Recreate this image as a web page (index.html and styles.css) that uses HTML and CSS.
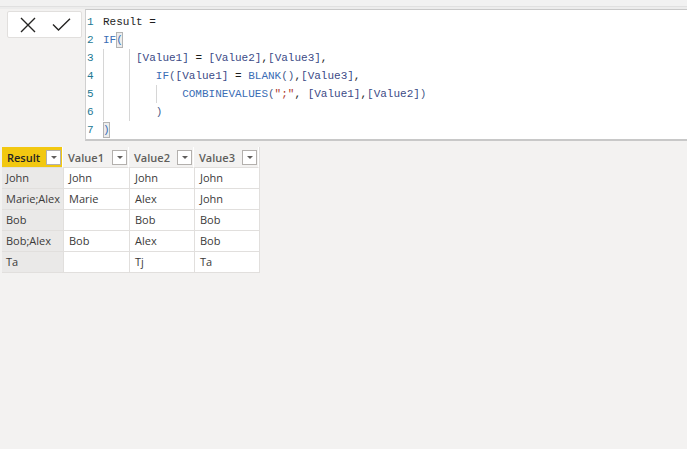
FILE: index.html
```html
<!DOCTYPE html>
<html>
<head>
<meta charset="utf-8">
<link rel="stylesheet" href="styles.css">
</head>
<body>
<div class="topbar"></div>
<div class="formula-row">
  <div class="actions">
    <svg class="icon" width="16" height="16" viewBox="0 0 16 16"><path d="M1 1 L15 15 M15 1 L1 15" stroke="#252423" stroke-width="1.4" fill="none"/></svg>
    <svg class="icon" width="19" height="13" viewBox="0 0 19 13"><path d="M1 6.5 L6.5 12 L18 0.8" stroke="#252423" stroke-width="1.4" fill="none"/></svg>
  </div>
  <div class="editor">
    <div class="line"><span class="ln">1</span><span class="code">Result =</span></div>
    <div class="line"><span class="ln">2</span><span class="code"><span class="kw">IF</span><span class="match">(</span></span></div>
    <div class="line"><span class="ln">3</span><span class="code"><span class="ind g"></span><span class="ind1 g"></span><span class="col">[Value1]</span> = <span class="col">[Value2]</span>,<span class="col">[Value3]</span>,</span></div>
    <div class="line"><span class="ln">4</span><span class="code"><span class="ind g"></span><span class="ind g"></span><span class="kw">IF</span><span class="par">(</span><span class="col">[Value1]</span> = <span class="kw">BLANK</span><span class="par">()</span>,<span class="col">[Value3]</span>,</span></div>
    <div class="line"><span class="ln">5</span><span class="code"><span class="ind g"></span><span class="ind g"></span><span class="ind g"></span><span class="kw">COMBINEVALUES</span><span class="par">(</span><span class="str">";"</span>, <span class="col">[Value1]</span>,<span class="col">[Value2]</span><span class="par">)</span></span></div>
    <div class="line"><span class="ln">6</span><span class="code"><span class="ind g"></span><span class="ind g"></span><span class="par">)</span></span></div>
    <div class="line"><span class="ln">7</span><span class="code"><span class="match">)</span></span></div>
  </div>
</div>
<div class="grid">
  <div class="hcell hresult"><span>Result</span><span class="dd"></span></div>
  <div class="hcell"><span>Value1</span><span class="dd"></span></div>
  <div class="hcell"><span>Value2</span><span class="dd"></span></div>
  <div class="hcell"><span>Value3</span><span class="dd"></span></div>

  <div class="cell first">John</div><div class="cell">John</div><div class="cell">John</div><div class="cell">John</div>
  <div class="cell first">Marie;Alex</div><div class="cell">Marie</div><div class="cell">Alex</div><div class="cell">John</div>
  <div class="cell first">Bob</div><div class="cell"></div><div class="cell">Bob</div><div class="cell">Bob</div>
  <div class="cell first">Bob;Alex</div><div class="cell">Bob</div><div class="cell">Alex</div><div class="cell">Bob</div>
  <div class="cell first">Ta</div><div class="cell"></div><div class="cell">Tj</div><div class="cell">Ta</div>
</div>
</body>
</html>
```

FILE: styles.css
```css
html, body {
  margin: 0;
  padding: 0;
}
body {
  width: 687px;
  height: 449px;
  background: #f3f2f1;
  overflow: hidden;
  font-family: "Open Sans", "Noto Sans", sans-serif;
}
.topbar {
  height: 6px;
  background: #f1f1f1;
  border-bottom: 1px solid #e0e0e0;
}
.formula-row {
  display: flex;
  height: 132px;
  border-top: 2px solid #ececec;
}
.actions {
  box-sizing: border-box;
  width: 75px;
  height: 27px;
  margin: 2px 0 0 7px;
  background: #ffffff;
  border: 1px solid #e1dfdd;
  border-radius: 2px;
  display: flex;
  align-items: center;
  padding-left: 12px;
  gap: 16px;
}
.icon {
  display: block;
}
.editor {
  flex: 1;
  margin-left: 3px;
  background: #ffffff;
  border-top: 1px solid #c8c8c8;
  border-left: 1px solid #d0d0d0;
  border-bottom: 2px solid #c8c8c8;
  padding-top: 3px;
  font-family: "Liberation Mono", "DejaVu Sans Mono", monospace;
  font-size: 11px;
  color: #1e1e1e;
}
.line {
  display: flex;
  height: 18px;
  line-height: 18px;
  white-space: pre;
}
.ln {
  width: 16px;
  padding-left: 1px;
  color: #237893;
}
.code {
  display: flex;
}
.ind {
  display: inline-block;
  width: 4ch;
  height: 18px;
}
.ind1 {
  display: inline-block;
  width: 1ch;
  height: 18px;
}
.g {
  box-shadow: inset 1px 0 0 #d6d6d6;
}
.kw {
  color: #3a6db5;
}
.col {
  color: #3b4a86;
}
.par {
  color: #4a5a8a;
}
.str {
  color: #b03a2e;
}
.match {
  color: #3a6db5;
  background: #ededed;
  box-shadow: inset 0 0 0 1px #b4b4b4;
  height: 16px;
  line-height: 16px;
  margin-top: 1px;
}
.grid {
  display: grid;
  grid-template-columns: 61px 66px 65px 65px;
  grid-auto-rows: 21px;
  margin: 6px 0 0 2px;
  width: 257px;
  font-size: 11px;
  color: #3b3a39;
  border-right: 1px solid #e1dfdd;
}
.hcell {
  display: flex;
  align-items: center;
  justify-content: space-between;
  padding: 0 1px 0 5px;
  font-weight: 600;
  color: #605e5c;
  background: #f3f2f1;
  border-right: 1px solid #ffffff;
  border-bottom: 1px solid #e1dfdd;
}
.hresult {
  background: #f2c811;
  color: #252423;
}
.dd {
  box-sizing: border-box;
  width: 15px;
  height: 15px;
  background: #ffffff;
  border: 1px solid #b3b0ad;
  position: relative;
}
.dd::after {
  content: "";
  position: absolute;
  left: 4px;
  top: 5px;
  border-left: 3px solid transparent;
  border-right: 3px solid transparent;
  border-top: 3px solid #605e5c;
}
.cell {
  background: #ffffff;
  padding-left: 5px;
  line-height: 20px;
  border-bottom: 1px solid #e1dfdd;
  border-left: 1px solid #e1dfdd;
  color: #3b3a39;
}
.cell.first {
  background: #eae9e8;
  border-left: 0;
  padding-left: 4px;
  color: #3b3a39;
}
```
